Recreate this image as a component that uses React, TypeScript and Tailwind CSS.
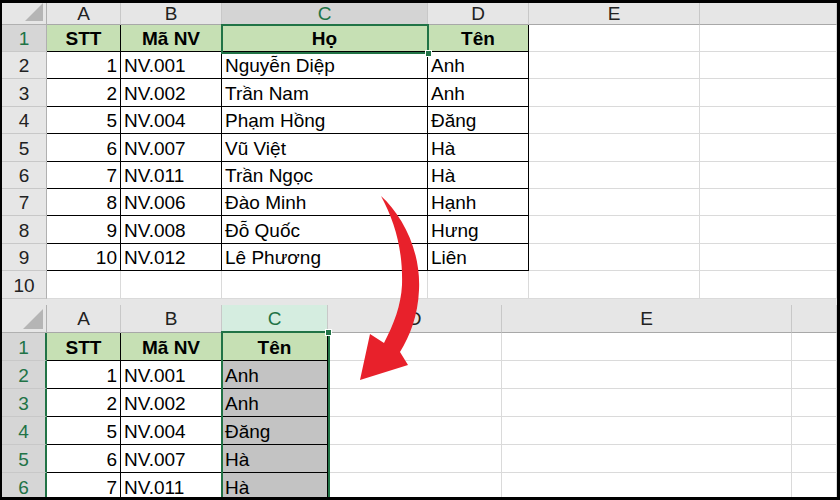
import type { ReactNode } from "react";

const GREEN = "#217346";

type Line = "table" | "grid";
type Align = "left" | "right" | "center";
type Fill = "white" | "green" | "gray";

function Cell({
  children,
  align = "left",
  bold = false,
  fill = "white",
  line = "grid",
}: {
  children?: ReactNode;
  align?: Align;
  bold?: boolean;
  fill?: Fill;
  line?: Line;
}) {
  const alignCls =
    align === "right"
      ? "justify-end pr-[3px]"
      : align === "center"
        ? "justify-center"
        : "justify-start pl-[3px]";
  const fillCls =
    fill === "green" ? "bg-[#c6e0b4]" : fill === "gray" ? "bg-[#c3c3c3]" : "bg-white";
  const lineCls = line === "table" ? "border-black" : "border-[#dadada]";
  return (
    <div
      className={`flex min-h-0 items-center overflow-hidden whitespace-nowrap border-r border-b pt-[2px] text-[19px] leading-[20px] text-black ${alignCls} ${fillCls} ${lineCls} ${bold ? "font-bold" : ""}`}
    >
      {children}
    </div>
  );
}

function RowHead({ n, selected = false, greenEdge = false }: { n: number; selected?: boolean; greenEdge?: boolean }) {
  return (
    <div
      className={`flex min-h-0 items-center justify-center border-b border-[#c8c8c8] pt-[2px] text-[19px] leading-[20px] ${
        selected ? "bg-[#d6d6d6] text-[#217346]" : "bg-[#e6e6e6] text-[#222]"
      } ${greenEdge ? "border-r-2 border-r-[#217346]" : "border-r border-r-[#b0b0b0]"}`}
    >
      {n}
    </div>
  );
}

function Corner({ size }: { size: number }) {
  return (
    <div className="relative border-r border-b border-[#b0b0b0] bg-[#e6e6e6]">
      <svg className="absolute right-[3px] bottom-[3px]" width={size} height={size} viewBox="0 0 20 20">
        <polygon points="20,0 20,20 0,20" fill="#b5b5b5" />
      </svg>
    </div>
  );
}

function ColHead({ children, variant = "plain" }: { children?: ReactNode; variant?: "plain" | "dark" | "mint" }) {
  const cls =
    variant === "dark"
      ? "bg-[#d4d4d4] text-[#217346]"
      : variant === "mint"
        ? "bg-[#d5ede0] text-[#217346]"
        : "bg-[#e6e6e6] text-[#222]";
  return (
    <div
      className={`flex min-h-0 items-center justify-center border-r border-b border-r-[#c8c8c8] border-b-[#a8a8a8] text-[19px] leading-[20px] ${cls}`}
    >
      {children}
    </div>
  );
}

const topRows = [
  ["1", "NV.001", "Nguyễn Diệp", "Anh"],
  ["2", "NV.002", "Trần Nam", "Anh"],
  ["5", "NV.004", "Phạm Hồng", "Đăng"],
  ["6", "NV.007", "Vũ Việt", "Hà"],
  ["7", "NV.011", "Trần Ngọc", "Hà"],
  ["8", "NV.006", "Đào Minh", "Hạnh"],
  ["9", "NV.008", "Đỗ Quốc", "Hưng"],
  ["10", "NV.012", "Lê Phương", "Liên"],
];

const topHeights = ["h-[27px]", "h-[28px]", "h-[27px]", "h-[28px]", "h-[27px]", "h-[27px]", "h-[28px]", "h-[27px]", "h-[28px]"];

const topCols = "grid grid-rows-1 grid-cols-[45px_74px_101px_206px_101px_171px_1fr]";
const bottomCols = "grid grid-rows-1 grid-cols-[45px_74px_101px_106px_174px_290px_1fr]";

function TopSheet() {
  return (
    <div className="relative h-[296px] overflow-hidden bg-white">
      <div className={`${topCols} h-[22px]`}>
        <Corner size={18} />
        <ColHead>A</ColHead>
        <ColHead>B</ColHead>
        <ColHead variant="dark">C</ColHead>
        <ColHead>D</ColHead>
        <ColHead>E</ColHead>
        <ColHead />
      </div>

      {/* header row of the table */}
      <div className={`${topCols} h-[27px]`}>
        <RowHead n={1} selected />
        <Cell align="center" bold fill="green" line="table">STT</Cell>
        <Cell align="center" bold fill="green" line="table">Mã NV</Cell>
        <Cell align="center" bold fill="green" line="table">Họ</Cell>
        <Cell align="center" bold fill="green" line="table">Tên</Cell>
        <Cell />
        <Cell />
      </div>

      {topRows.map((r, i) => (
        <div key={i} className={`${topCols} ${topHeights[i]}`}>
          <RowHead n={i + 2} />
          <Cell align="right" line="table">{r[0]}</Cell>
          <Cell line="table">{r[1]}</Cell>
          <Cell line="table">{r[2]}</Cell>
          <Cell line="table">{r[3]}</Cell>
          <Cell />
          <Cell />
        </div>
      ))}

      <div className={`${topCols} h-[28px]`}>
        <RowHead n={10} />
        <Cell />
        <Cell />
        <Cell />
        <Cell />
        <Cell />
        <Cell />
      </div>

      {/* active cell C1 */}
      <div className="absolute left-[219px] top-[21px] h-[30px] w-[208px] border-2 border-[#217346]" />
      <div className="absolute left-[423px] top-[47px] h-[7px] w-[7px] border border-white bg-[#217346]" />
    </div>
  );
}

const bottomRows = [
  ["1", "NV.001", "Anh"],
  ["2", "NV.002", "Anh"],
  ["5", "NV.004", "Đăng"],
  ["6", "NV.007", "Hà"],
  ["7", "NV.011", "Hà"],
];

function BottomSheet() {
  return (
    <div className="relative h-[198px] overflow-hidden bg-white">
      <div className="h-[34px] bg-[#e6e6e6] pt-[6px]">
        <div className={`${bottomCols} h-[28px]`}>
          <Corner size={20} />
          <ColHead>A</ColHead>
          <ColHead>B</ColHead>
          <ColHead variant="mint">C</ColHead>
          <ColHead>D</ColHead>
          <ColHead>E</ColHead>
          <ColHead />
        </div>
      </div>

      <div className={`${bottomCols} h-[28px]`}>
        <RowHead n={1} selected greenEdge />
        <Cell align="center" bold fill="green" line="table">STT</Cell>
        <Cell align="center" bold fill="green" line="table">Mã NV</Cell>
        <Cell align="center" bold fill="green" line="table">Tên</Cell>
        <Cell />
        <Cell />
        <Cell />
      </div>

      {bottomRows.map((r, i) => (
        <div key={i} className={`${bottomCols} h-[28px]`}>
          <RowHead n={i + 2} selected greenEdge />
          <Cell align="right" line="table">{r[0]}</Cell>
          <Cell line="table">{r[1]}</Cell>
          <Cell fill="gray" line="table">{r[2]}</Cell>
          <Cell />
          <Cell />
          <Cell />
        </div>
      ))}

      {/* selected column C */}
      <div className="absolute left-[219px] top-[32px] h-[200px] w-[109px] border-2 border-[#217346]" />
      <div className="absolute left-[323px] top-[30px] h-[7px] w-[7px] border border-white bg-[#217346]" />
    </div>
  );
}

function Arrow() {
  return (
    <svg className="pointer-events-none absolute inset-0" width="840" height="500" viewBox="0 0 840 500">
      <path
        d="M381 196 C402 215 421 250 419 290 C418 315 410 336 400 352 L408 365 L360 380 L370 334 L384 343 C394 324 401 305 402 285 C403 250 395 222 381 196 Z"
        fill="#e8212b"
      />
    </svg>
  );
}

export default function App() {
  return (
    <div
      className="relative h-[500px] w-[840px] overflow-hidden bg-black pt-[3px] pr-[3px] pb-[3px] pl-[2px] font-['Liberation_Sans',Arial,sans-serif]"
      style={{ color: GREEN }}
    >
      <TopSheet />
      <BottomSheet />
      <Arrow />
    </div>
  );
}
